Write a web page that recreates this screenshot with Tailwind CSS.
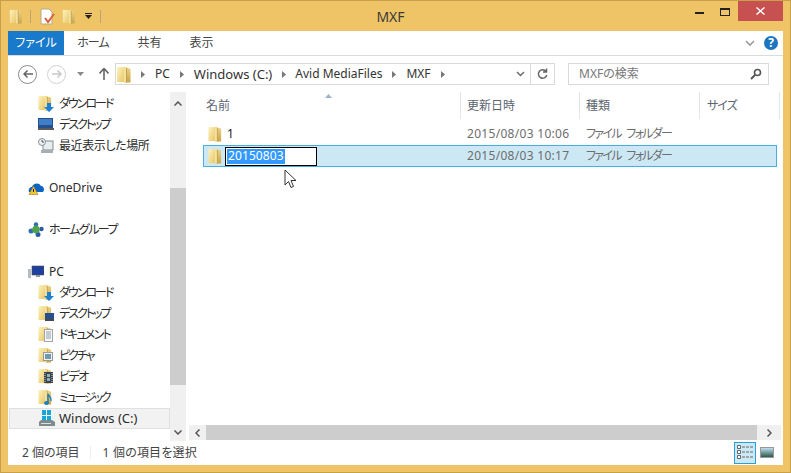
<!DOCTYPE html>
<html lang="ja">

<head>
    <meta charset="UTF-8">
    <title>MXF</title>
    <script src="https://cdn.jsdelivr.net/npm/@tailwindcss/browser@4"></script>
</head>

<body class="w-[791px] h-[473px] overflow-hidden bg-[#efc467] font-['Noto_Sans','Noto_Sans_CJK_JP',sans-serif] [font-feature-settings:'palt'] text-[12px] leading-none text-[#2b2b2b]">
    <svg class="absolute w-0 h-0">
        <defs>
            <linearGradient id="fl" x1="0" y1="0" x2="1" y2="1">
                <stop offset="0" stop-color="#fdf3c0" />
                <stop offset="1" stop-color="#e8c869" />
            </linearGradient>
            <linearGradient id="fr" x1="0" y1="0" x2="0" y2="1">
                <stop offset="0" stop-color="#efd588" />
                <stop offset="1" stop-color="#c9a548" />
            </linearGradient>
        </defs>
        <symbol id="folder" viewBox="0 0 14 17">
            <path d="M0 1.500L1 1h5l1 .5V16H0z" fill="url(#fl)" />
            <path d="M7 .5l6.500 2.500v13.500H7z" fill="url(#fr)" />
            <path d="M7 1l2.500 1v14.500H7z" fill="#f6e29f" />
            <path d="M9.500 2v14.500" stroke="#b8953f" stroke-width=".8" />
        </symbol>
    </svg>

    <div class="h-[473px] border border-[#c9a04a] px-[7px] pb-[7px] flex flex-col">
        <!-- title bar -->
        <div class="h-[30px] shrink-0 flex items-start relative">
            <div class="flex items-center h-[30px] pl-[1px]">
                <svg class="w-[14px] h-[15px]"><use href="#folder" /></svg>
                <div class="w-px h-[13px] bg-[#b9a574] ml-[7px]"></div>
                <svg class="w-[15px] h-[17px] ml-[9px]" viewBox="0 0 15 17">
                    <path d="M1 1h8l3 3v12H1z" fill="#fff" stroke="#b7a98c" />
                    <path d="M5 10l3 4 6-8" fill="none" stroke="#d9623b" stroke-width="2" />
                </svg>
                <svg class="w-[14px] h-[15px] ml-[7px]"><use href="#folder" /></svg>
                <svg class="w-[7px] h-[6px] ml-[9px]" viewBox="0 0 7 6">
                    <path d="M0 0h7v1H0zM0 2h7L3.500 6z" fill="#222" />
                </svg>
                <div class="w-px h-[13px] bg-[#b9a574] ml-[8px]"></div>
            </div>
            <div class="absolute left-0 right-[10px] top-[9px] text-center text-[14px] text-[#3a3a3a]">MXF</div>
            <div class="ml-auto flex items-start">
                <div class="w-[26px] h-[20px] flex items-center justify-center"><div class="w-[9px] h-[2px] bg-[#222] mt-[3px]"></div></div>
                <div class="w-[26px] h-[20px] flex items-center justify-center"><div class="w-[10px] h-[8px] border border-[#222] border-t-2 mt-[1px]"></div></div>
                <div class="w-[45px] h-[20px] bg-[#c75050] flex items-center justify-center">
                    <svg class="w-[9px] h-[8px]" viewBox="0 0 9 8"><path d="M1 0l3.500 3L8 0l1 1-3.500 3L9 7 8 8 4.500 5 1 8 0 7l3.500-3L0 1z" fill="#fff" /></svg>
                </div>
            </div>
        </div>

        <div class="flex-1 bg-white flex flex-col min-h-0">
            <!-- ribbon tabs -->
            <div class="h-[25px] shrink-0 flex items-stretch border-b border-[#dadbdc]">
                <div class="w-[56px] bg-[#1979ca] text-white flex items-center justify-center">ファイル</div>
                <div class="w-[58px] flex items-center justify-center text-[#444] tracking-[-1px]">ホーム</div>
                <div class="w-[55px] flex items-center justify-center text-[#444]">共有</div>
                <div class="w-[49px] flex items-center justify-center text-[#444]">表示</div>
                <div class="ml-auto flex items-center gap-[9px] pr-[5px]">
                    <svg class="w-[10px] h-[7px]" viewBox="0 0 10 7"><path d="M1 1l4 4 4-4" fill="none" stroke="#9a9a9a" stroke-width="1.600" /></svg>
                    <div class="w-[14px] h-[14px] rounded-full bg-[#1c75bf] text-white text-[12px] font-bold flex items-center justify-center">?</div>
                </div>
            </div>

            <!-- address bar -->
            <div class="h-[36px] shrink-0 flex items-center pl-[10px] pr-[14px]">
                <div class="w-[19px] h-[19px] rounded-full border-[1.5px] border-[#8a8a8a] flex items-center justify-center shrink-0">
                    <svg class="w-[10px] h-[8px]" viewBox="0 0 10 8"><path d="M4.500 .5L1 4l3.500 3.500M1 4h9" fill="none" stroke="#666" stroke-width="1.500" /></svg>
                </div>
                <div class="w-[19px] h-[19px] rounded-full border-[1.5px] border-[#d2d2d2] flex items-center justify-center ml-[10px] shrink-0">
                    <svg class="w-[10px] h-[8px]" viewBox="0 0 10 8"><path d="M5.500 .5L9 4 5.500 7.500M0 4h9" fill="none" stroke="#c8c8c8" stroke-width="1.500" /></svg>
                </div>
                <svg class="w-[7px] h-[4px] ml-[11px] shrink-0" viewBox="0 0 7 4"><path d="M0 0h7L3.500 4z" fill="#8a8a8a" /></svg>
                <svg class="w-[10px] h-[12px] ml-[15px] shrink-0" viewBox="0 0 10 12"><path d="M5 .5L9.500 5.500M5 .5L.5 5.500M5 1v11" fill="none" stroke="#666" stroke-width="1.600" /></svg>

                <div class="w-[416px] h-[22px] ml-[6px] border border-[#d9d9d9] flex items-center text-[#333] shrink-0">
                    <svg class="w-[14px] h-[17px] ml-[1px]"><use href="#folder" /></svg>
                    <svg class="w-[4px] h-[7px] ml-[10px]" viewBox="0 0 4 7"><path d="M0 0l4 3.500L0 7z" fill="#777" /></svg>
                    <span class="ml-[10px]">PC</span>
                    <svg class="w-[4px] h-[7px] ml-[10px]" viewBox="0 0 4 7"><path d="M0 0l4 3.500L0 7z" fill="#777" /></svg>
                    <span class="ml-[10px] text-[13px]">Windows (C:)</span>
                    <svg class="w-[4px] h-[7px] ml-[10px]" viewBox="0 0 4 7"><path d="M0 0l4 3.500L0 7z" fill="#777" /></svg>
                    <span class="ml-[9px]">Avid MediaFiles</span>
                    <svg class="w-[4px] h-[7px] ml-[10px]" viewBox="0 0 4 7"><path d="M0 0l4 3.500L0 7z" fill="#777" /></svg>
                    <span class="ml-[10px]">MXF</span>
                    <svg class="w-[4px] h-[7px] ml-[10px]" viewBox="0 0 4 7"><path d="M0 0l4 3.500L0 7z" fill="#777" /></svg>
                    <svg class="w-[9px] h-[6px] ml-auto mr-[5px]" viewBox="0 0 9 6"><path d="M1 1l3.500 3.500L8 1" fill="none" stroke="#666" stroke-width="1.400" /></svg>
                </div>
                <div class="w-[24px] h-[22px] border border-l-0 border-[#d9d9d9] flex items-center justify-center shrink-0">
                    <svg class="w-[11px] h-[12px]" viewBox="0 0 11 12"><path d="M9 3.500A4.200 4.200 0 1 0 9.700 7M9.500 .5v3.500H6" fill="none" stroke="#666" stroke-width="1.500" /></svg>
                </div>
                <div class="ml-auto w-[201px] h-[22px] border border-[#d9d9d9] flex items-center pl-[10px] pr-[6px] text-[#777] shrink-0">
                    <span>MXFの検索</span>
                    <svg class="w-[12px] h-[12px] ml-auto" viewBox="0 0 12 12"><circle cx="7.500" cy="4.500" r="3" fill="none" stroke="#555" stroke-width="1.600" /><path d="M5 7l-4 4" stroke="#555" stroke-width="2" /></svg>
                </div>
            </div>

            <!-- main -->
            <div class="flex-1 min-h-0 flex">
                <!-- navigation pane -->
                <div class="w-[162px] shrink-0 pt-[1px] text-[#2b2b2b]">
                    <div class="h-[21px] flex items-center pl-[30px]">
                        <svg class="w-[16px] h-[17px]" viewBox="0 0 16 17"><use href="#folder" width="14" height="16" /><path d="M9 8h4v4h3l-5 5-5-5h3z" fill="#1f7fd0" /></svg>
                        <span class="ml-[5px] tracking-[-2px]">ダウンロード</span>
                    </div>
                    <div class="h-[21px] flex items-center pl-[30px]">
                        <svg class="w-[16px] h-[13px]" viewBox="0 0 16 13"><rect width="15" height="10" fill="#24508f" /><rect x="1" y="1" width="13" height="6" fill="#3f7fc8" /><rect y="10" width="16" height="2" fill="#5b5b5b" /></svg>
                        <span class="ml-[5px] tracking-[-2px]">デスクトップ</span>
                    </div>
                    <div class="h-[21px] flex items-center pl-[30px]">
                        <svg class="w-[16px] h-[16px]" viewBox="0 0 16 16"><rect x="5" y="3" width="10" height="9" fill="#e8eef0" stroke="#7f8a90" /><circle cx="4" cy="4" r="3.500" fill="#eef1f2" stroke="#8a949c" /><path d="M4 2v2h2" fill="none" stroke="#555" /><rect x="3" y="12" width="12" height="3" fill="#a7afb5" /></svg>
                        <span class="ml-[5px] tracking-[-.4px]">最近表示した場所</span>
                    </div>
                    <div class="h-[21px]"></div>
                    <div class="h-[21px] flex items-center pl-[20px]">
                        <svg class="w-[16px] h-[14px]" viewBox="0 0 16 14"><path d="M1 11c-1-3 1-5 3-5 1-4 7-5 9-1 2 0 3 2 3 4l-1 2z" fill="#0b63c4" /><path d="M5.500 5l-4.500 8.500h9z" fill="#f4c430" stroke="#8a6d10" stroke-width=".5" /><path d="M5.500 8v3" stroke="#222" /></svg>
                        <span class="ml-[5px]">OneDrive</span>
                    </div>
                    <div class="h-[21px]"></div>
                    <div class="h-[21px] flex items-center pl-[20px]">
                        <svg class="w-[16px] h-[15px]" viewBox="0 0 16 15"><circle cx="3" cy="9" r="2.500" fill="#2f6db5" /><circle cx="8" cy="2.500" r="2.200" fill="#2f6db5" /><circle cx="13.500" cy="7" r="2.200" fill="#2b58a8" /><circle cx="10" cy="12.500" r="2.500" fill="#2b58a8" /><circle cx="8" cy="7.500" r="3.800" fill="#4fa34f" /></svg>
                        <span class="ml-[5px] tracking-[-1.500px]">ホームグループ</span>
                    </div>
                    <div class="h-[21px]"></div>
                    <div class="h-[21px] flex items-center pl-[20px]">
                        <svg class="w-[16px] h-[14px]" viewBox="0 0 16 14"><rect x="0" y="4" width="3" height="9" fill="#b5bcc4" /><rect x="4" y="1" width="12" height="9" fill="#1d3f9e" stroke="#555" stroke-width=".6" /><path d="M8 10h4v2H8z" fill="#8d96a0" /></svg>
                        <span class="ml-[5px]">PC</span>
                    </div>
                    <div class="h-[21px] flex items-center pl-[30px]">
                        <svg class="w-[16px] h-[17px]" viewBox="0 0 16 17"><use href="#folder" width="14" height="16" /><path d="M9 8h4v4h3l-5 5-5-5h3z" fill="#1f7fd0" /></svg>
                        <span class="ml-[5px] tracking-[-2px]">ダウンロード</span>
                    </div>
                    <div class="h-[21px] flex items-center pl-[30px]">
                        <svg class="w-[16px] h-[17px]" viewBox="0 0 16 17"><use href="#folder" width="14" height="16" /><rect x="7" y="8" width="9" height="6" fill="#24508f" /><rect x="7" y="14" width="9" height="2" fill="#4a4a4a" /></svg>
                        <span class="ml-[5px] tracking-[-2px]">デスクトップ</span>
                    </div>
                    <div class="h-[21px] flex items-center pl-[30px]">
                        <svg class="w-[16px] h-[17px]" viewBox="0 0 16 17"><use href="#folder" width="14" height="16" /><rect x="6.500" y="3.500" width="8" height="12" fill="#f6f6f6" stroke="#a5a5a5" /><path d="M8 6h5M8 8h5M8 10h5M8 12h5" stroke="#8fa0b0" /></svg>
                        <span class="ml-[5px] tracking-[-1.700px]">ドキュメント</span>
                    </div>
                    <div class="h-[21px] flex items-center pl-[30px]">
                        <svg class="w-[16px] h-[17px]" viewBox="0 0 16 17"><use href="#folder" width="14" height="16" /><rect x="5.500" y="5.500" width="9" height="8" fill="#eef2f2" stroke="#9a9a9a" /><rect x="7" y="7" width="6" height="5" fill="#6d9ab0" /></svg>
                        <span class="ml-[5px] tracking-[-2px]">ピクチャ</span>
                    </div>
                    <div class="h-[21px] flex items-center pl-[30px]">
                        <svg class="w-[16px] h-[17px]" viewBox="0 0 16 17"><use href="#folder" width="14" height="16" /><rect x="6" y="4" width="9" height="11" fill="#39434a" /><path d="M7 5v9M14 5v9" stroke="#d8d8d8" stroke-dasharray="1 1" /><rect x="9" y="6" width="3" height="3" fill="#8fb0c0" /><rect x="9" y="10" width="3" height="3" fill="#8fb0c0" /></svg>
                        <span class="ml-[5px] tracking-[-1.500px]">ビデオ</span>
                    </div>
                    <div class="h-[21px] flex items-center pl-[30px]">
                        <svg class="w-[16px] h-[17px]" viewBox="0 0 16 17"><use href="#folder" width="14" height="16" /><path d="M10 5v9" stroke="#1f7fb8" stroke-width="1.500" /><path d="M10 5c1 3 4 3 3 7" fill="none" stroke="#1f7fb8" stroke-width="1.500" /><ellipse cx="8.500" cy="14" rx="2.500" ry="2" fill="#1f7fb8" /></svg>
                        <span class="ml-[5px] tracking-[-2.200px]">ミュージック</span>
                    </div>
                    <div class="h-[21px] flex items-center pl-[29px] bg-[#f2f2f2] border border-[#e0e0e0] ml-[1px]">
                        <svg class="w-[16px] h-[17px]" viewBox="0 0 16 17"><path d="M3 0h4v5H3zM8 0h4v5H8zM3 6h4v4H3zM8 6h4v4H8z" fill="#19a5d8" /><path d="M2 10h11l3 2v4H0v-4z" fill="#7e8a8c" /><rect x="2" y="13" width="10" height="1" fill="#cfe3ea" /></svg>
                        <span class="ml-[4px] text-[13px]">Windows (C:)</span>
                    </div>
                </div>

                <!-- navigation scrollbar -->
                <div class="w-[16px] shrink-0 bg-[#f0f0f0] flex flex-col h-[349px]">
                    <div class="h-[22px] flex items-center justify-center"><svg class="w-[8px] h-[5px]" viewBox="0 0 8 5"><path d="M.5 4.500L4 1l3.500 3.500" fill="none" stroke="#555" stroke-width="1.500" /></svg></div>
                    <div class="h-[74px]"></div>
                    <div class="h-[197px] bg-[#cdcdcd]"></div>
                    <div class="flex-1"></div>
                    <div class="h-[17px] flex items-center justify-center"><svg class="w-[8px] h-[5px]" viewBox="0 0 8 5"><path d="M.5 .5L4 4 7.500 .5" fill="none" stroke="#555" stroke-width="1.500" /></svg></div>
                </div>

                <!-- file list -->
                <div class="flex-1 min-w-0 flex flex-col relative pl-[3px]">
                    <svg class="absolute left-[139px] top-[2px] w-[7px] h-[4px]" viewBox="0 0 7 4"><path d="M0 4l3.500-4L7 4z" fill="#9cb4cc" /></svg>
                    <div class="h-[27px] flex text-[#5b6470] shrink-0">
                        <div class="w-[272px] pl-[17px] pt-[8px] border-r border-[#e5e5e5]">名前</div>
                        <div class="w-[119px] pl-[6px] pt-[8px] border-r border-[#e5e5e5]">更新日時</div>
                        <div class="w-[120px] pl-[6px] pt-[8px] border-r border-[#e5e5e5]">種類</div>
                        <div class="w-[80px] pl-[7px] pt-[8px] border-r border-[#e5e5e5] tracking-[-1px]">サイズ</div>
                    </div>
                    <div class="mt-[4px] ml-[14px] h-[22px] flex items-center text-[#6d6d6d] shrink-0">
                        <div class="w-[258px] flex items-center pl-[5px] shrink-0"><svg class="w-[14px] h-[16px]"><use href="#folder" /></svg><span class="ml-[5px] text-[#222]">1</span></div>
                        <div class="w-[119px] pl-[6px] whitespace-nowrap tracking-[.3px]">2015/08/03 10:06</div>
                        <div class="pl-[6px] tracking-[-1.700px] [word-spacing:4px]">ファイル フォルダー</div>
                    </div>
                    <div class="ml-[14px] h-[22px] flex items-center text-[#6d6d6d] shrink-0 w-[574px] bg-[#cce8f5] border border-[#26a0da]/80 relative">
                        <div class="w-[257px] flex items-center pl-[4px] shrink-0">
                            <svg class="w-[14px] h-[16px]"><use href="#folder" /></svg>
                            <div class="ml-[3px] w-[92px] h-[19px] bg-white border border-black flex items-center pl-[1px]"><span class="bg-[#3399ff] text-white h-[15px] flex items-center px-px tracking-[.1px]">20150803</span></div>
                        </div>
                        <div class="w-[119px] pl-[6px] whitespace-nowrap tracking-[.3px]">2015/08/03 10:17</div>
                        <div class="pl-[6px] tracking-[-1.700px] [word-spacing:4px]">ファイル フォルダー</div>
                    </div>
                    <svg class="absolute left-[98px] top-[77px] w-[14px] h-[20px]" viewBox="0 0 14 20">
                        <path d="M1 1v15l3.500-3.500 2.500 6 2.500-1-2.500-6h5z" fill="#fff" stroke="#333" />
                    </svg>
                    <div class="flex-1"></div>
                    <!-- horizontal scrollbar -->
                    <div class="h-[15px] flex bg-[#f0f0f0] shrink-0 w-[592px]">
                        <div class="w-[17px] flex items-center justify-center"><svg class="w-[5px] h-[8px]" viewBox="0 0 5 8"><path d="M4.500 .5L1 4l3.500 3.500" fill="none" stroke="#555" stroke-width="1.500" /></svg></div>
                        <div class="w-[551px] bg-[#cdcdcd]"></div>
                        <div class="flex-1 flex items-center justify-center"><svg class="w-[5px] h-[8px]" viewBox="0 0 5 8"><path d="M.5 .5L4 4 .5 7.500" fill="none" stroke="#555" stroke-width="1.500" /></svg></div>
                    </div>
                </div>
            </div>

            <!-- status bar -->
            <div class="h-[25px] shrink-0 flex items-center text-[#444] pl-[14px]">
                <span>2 個の項目</span>
                <div class="w-px h-[13px] bg-[#eee] ml-[10px]"></div>
                <span class="ml-[12px] tracking-[.2px]">1 個の項目を選択</span>
                <div class="ml-auto flex items-center pr-[9px]">
                    <div class="w-[22px] h-[22px] bg-[#cce8f5] border border-[#26a0da] flex items-center justify-center">
                        <svg class="w-[16px] h-[15px]" viewBox="0 0 16 15">
                            <path d="M.5 .5h3v3h-3zM.5 5.500h3v3h-3zM.5 10.500h3v3h-3z" fill="#fff" stroke="#666" />
                            <path d="M5 2h11M5 7h11M5 12h11" stroke="#666" stroke-dasharray="3 1" />
                        </svg>
                    </div>
                    <div class="w-[14px] h-[11px] ml-[4px] border border-[#999] bg-linear-to-b from-[#bfe0f0] to-[#2f5a50]"></div>
                </div>
            </div>
        </div>
    </div>
</body>

</html>
